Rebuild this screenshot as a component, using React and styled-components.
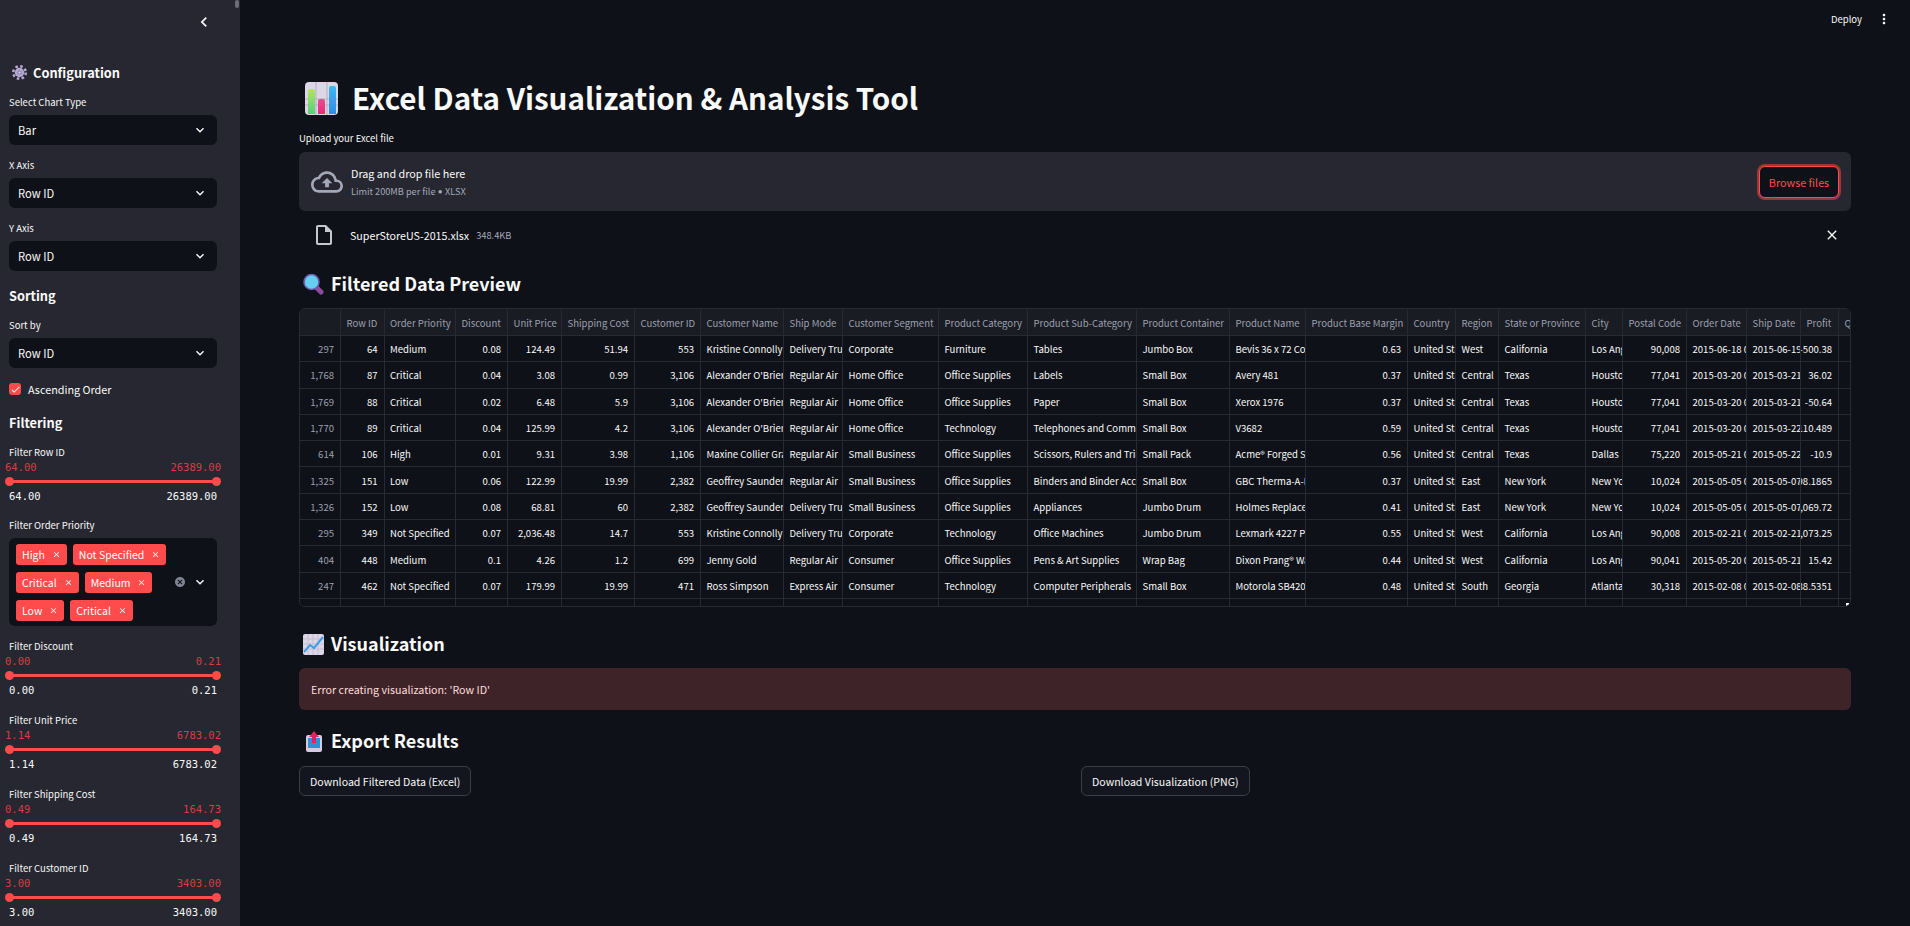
import React from 'react';
import styled, { createGlobalStyle } from 'styled-components';
import { MdChevronLeft, MdExpandMore, MdClose, MdCancel, MdMoreVert, MdOutlineCloudUpload, MdOutlineInsertDriveFile, MdCheck } from 'react-icons/md';

const SANS = '"Noto Sans CJK SC", "Lato", "Liberation Sans", sans-serif';
const MONO = '"DejaVu Sans Mono", "Liberation Mono", monospace';

const GlobalStyle = createGlobalStyle`
    html, body {
        margin: 0;
        padding: 0;
        background: #0e1117;
        overflow: hidden;
    }
    * {
        box-sizing: border-box;
    }
`

const Page = styled('div')`
    display: flex;
    width: 1910px;
    height: 926px;
    overflow: hidden;
    background: #0e1117;
    color: #fafafa;
    font-family: ${SANS};
`

const Sidebar = styled('aside')`
    position: relative;
    flex: 0 0 240px;
    height: 926px;
    overflow: hidden;
    background: #262730;
    padding: 0 23px 0 9px;
`

const ScrollThumb = styled('div')`
    position: absolute;
    top: 0;
    right: 1px;
    width: 4px;
    height: 8px;
    border-radius: 2px;
    background: #6b6d76;
`

const CollapseRow = styled('div')`
    display: flex;
    justify-content: flex-end;
    align-items: center;
    height: 44px;
    padding-right: 4px;
    font-size: 20px;
    margin-right: -1px;
`

const SideTitle = styled('div')`
    display: flex;
    align-items: center;
    gap: 6px;
    height: 18px;
    padding: 0 0 1px ${p => p.$indent || 0}px;
    margin-top: ${p => p.$top}px;
    font-size: 12.8px;
    font-weight: 700;
`

const FieldLabel = styled('div')`
    height: 14px;
    line-height: 14px;
    margin-top: ${p => p.$top}px;
    font-size: 9.5px;
    color: #fafafa;
    white-space: nowrap;
`

const SelectBox = styled('div')`
    display: flex;
    align-items: center;
    justify-content: space-between;
    height: 30px;
    margin-top: 6px;
    padding: 0 9px;
    border-radius: 6px;
    background: #0e1117;
    font-size: 11.2px;
    svg {
        font-size: 16px;
    }
`

const CheckRow = styled('div')`
    display: flex;
    align-items: center;
    gap: 7px;
    height: 12px;
    margin-top: 15px;
    font-size: 10.8px;
`

const CheckMark = styled('span')`
    display: flex;
    align-items: center;
    justify-content: center;
    width: 12px;
    height: 12px;
    border-radius: 3px;
    background: #ff4b4b;
    color: #fff;
    font-size: 11px;
`

const RedValues = styled('div')`
    display: flex;
    justify-content: space-between;
    height: 12px;
    line-height: 12px;
    margin: 2px -4px 0;
    font-family: ${MONO};
    font-size: 10.5px;
    color: #d43f42;
`

const TrackRow = styled('div')`
    display: flex;
    align-items: center;
    height: 16px;
`

const Track = styled('div')`
    position: relative;
    width: 100%;
    height: 3px;
    background: #ff4b4b;
    &::before, &::after {
        content: '';
        position: absolute;
        top: -3px;
        width: 9px;
        height: 9px;
        border-radius: 50%;
        background: #ff4b4b;
    }
    &::before {
        left: -4px;
    }
    &::after {
        right: -4px;
    }
`

const EndValues = styled('div')`
    display: flex;
    justify-content: space-between;
    height: 12px;
    line-height: 12px;
    margin-top: 1px;
    font-family: ${MONO};
    font-size: 10.5px;
    color: #fafafa;
`

const MultiBox = styled('div')`
    display: flex;
    align-items: center;
    justify-content: space-between;
    height: 88px;
    margin-top: 6px;
    padding: 0 9px 0 7px;
    border-radius: 6px;
    background: #0e1117;
`

const TagWrap = styled('div')`
    display: flex;
    flex-wrap: wrap;
    gap: 7px 6px;
    width: 160px;
`

const Tag = styled('span')`
    display: inline-flex;
    align-items: center;
    justify-content: space-between;
    gap: 7px;
    height: 21px;
    padding: 0 6px;
    border-radius: 3px;
    background: #ff4b4b;
    color: #fff;
    font-size: 10.5px;
    white-space: nowrap;
    svg {
        font-size: 9px;
    }
`

const MultiIcons = styled('div')`
    display: flex;
    align-items: center;
    gap: 6px;
    font-size: 16px;
`

const ClearIcon = styled('span')`
    display: flex;
    color: #808495;
    font-size: 12px;
`

const Main = styled('main')`
    flex: 1;
    min-width: 0;
    padding: 0 59px;
`

const TopBar = styled('div')`
    display: flex;
    align-items: center;
    justify-content: flex-end;
    gap: 14px;
    height: 38px;
    margin-right: -41px;
    font-size: 9.5px;
    svg {
        font-size: 16px;
    }
`

const PageTitle = styled('h1')`
    display: flex;
    align-items: center;
    gap: 14px;
    height: 33px;
    padding-bottom: 2px;
    margin: 44px 0 0 6px;
    font-size: 29.6px;
    font-weight: 700;
    line-height: 31px;
    white-space: nowrap;
    svg {
        margin-top: 2px;
    }
`

const UploadLabel = styled('div')`
    height: 14px;
    line-height: 14px;
    margin-top: 16px;
    font-size: 9.5px;
`

const Uploader = styled('div')`
    display: flex;
    align-items: center;
    height: 59px;
    margin-top: 7px;
    padding: 0 12px;
    border-radius: 6px;
    background: #262730;
`

const UploadIcon = styled('span')`
    display: flex;
    flex: 0 0 40px;
    color: #a3a8b8;
    font-size: 32px;
`

const UploadText = styled('div')`
    flex: 1;
`

const DropTitle = styled('div')`
    margin-top: 1px;
    font-size: 10.75px;
    line-height: 16px;
`

const DropHint = styled('div')`
    margin-top: 2px;
    font-size: 9.2px;
    line-height: 14px;
    color: #a3a8b8;
`

const HintDot = styled('span')`
    font-family: "Lato", sans-serif;
`

const BrowseButton = styled('button')`
    width: 80px;
    height: 32px;
    border: 1px solid #ff4b4b;
    border-radius: 6px;
    background: #0e1117;
    box-shadow: 0 0 0 2px rgba(255, 75, 75, 0.5);
    color: #ff4b4b;
    font-family: ${SANS};
    font-size: 10.8px;
    padding: 0;
`

const FileRow = styled('div')`
    display: flex;
    align-items: center;
    height: 18px;
    margin-top: 15px;
    padding-left: 14px;
`

const FileIcon = styled('span')`
    display: flex;
    flex: 0 0 38px;
    color: #c5c8d2;
    font-size: 24px;
    margin-left: -1px;
`

const FileName = styled('span')`
    font-size: 10.7px;
`

const FileSize = styled('span')`
    flex: 1;
    margin-left: 7px;
    font-size: 9.3px;
    color: #a3a8b8;
`

const FileClose = styled('span')`
    display: flex;
    margin-right: 11px;
    font-size: 16px;
`

const Heading = styled('h2')`
    display: flex;
    align-items: center;
    gap: 7px;
    height: 26px;
    padding-bottom: 2px;
    margin: ${p => p.$top}px 0 0 3px;
    font-size: 18px;
    font-weight: 700;
    white-space: nowrap;
    svg {
        margin-top: 2px;
    }
`

const TableFrame = styled('div')`
    position: relative;
    height: 299px;
    margin-top: 11px;
    overflow: hidden;
    border: 1px solid #262b33;
    border-radius: 6px;
    font-size: 9.55px;
`

const TableRow = styled('div')`
    display: grid;
    height: ${p => p.$height}px;
    background: ${p => (p.$head ? '#1a1c24' : '#0e1117')};
`

const Cell = styled('div')`
    display: flex;
    align-items: center;
    justify-content: ${p => (p.$right ? 'flex-end' : 'flex-start')};
    min-width: 0;
    padding: 1px 6px 0 5.5px;
    overflow: hidden;
    white-space: nowrap;
    border-right: 1px solid #262b33;
    border-bottom: 1px solid #262b33;
    color: ${p => (p.$dim ? '#9ca0ae' : '#fafafa')};
    > span {
        flex: 0 0 auto;
    }
`

const ResizeHandle = styled('div')`
    position: absolute;
    right: 1px;
    bottom: 0;
    width: 3px;
    height: 3px;
    background: #fafafa;
`

const ErrorBox = styled('div')`
    display: flex;
    align-items: center;
    height: 42px;
    margin-top: 11px;
    padding: 0 12px;
    border-radius: 6px;
    background: #3e2428;
    color: #ffdede;
    font-size: 10.7px;
`

const ButtonColumns = styled('div')`
    display: grid;
    grid-template-columns: 1fr 1fr;
    gap: 12px;
    margin-top: 12px;
`

const DownloadButton = styled('button')`
    justify-self: start;
    height: 30px;
    padding: 0 10px;
    border: 1px solid #3b3e48;
    border-radius: 6px;
    background: #13161e;
    color: #fafafa;
    font-family: ${SANS};
    font-size: 10.6px;
`

const GearIcon = () => (
    <svg width="15" height="15" viewBox="0 0 24 24">
        <circle cx="12" cy="12" r="7.5" fill="#b7a8d2" />
        <circle cx="12" cy="12" r="10" fill="none" stroke="#b7a8d2" strokeWidth="4" strokeDasharray="4 3.85" />
        <circle cx="12" cy="12" r="3.6" fill="#8f80b0" />
        <circle cx="12" cy="12" r="1.8" fill="#d9d0ea" />
    </svg>
)

const BarChartIcon = () => (
    <svg width="33" height="33" viewBox="0 0 33 33">
        <defs>
            <linearGradient id="barGreen" x1="0" y1="0" x2="0" y2="1">
                <stop offset="0" stopColor="#b5e45e" />
                <stop offset="1" stopColor="#52d07c" />
            </linearGradient>
            <linearGradient id="barPink" x1="0" y1="0" x2="0" y2="1">
                <stop offset="0" stopColor="#f2488f" />
                <stop offset="1" stopColor="#e62b7c" />
            </linearGradient>
            <linearGradient id="barBlue" x1="0" y1="0" x2="0" y2="1">
                <stop offset="0" stopColor="#3fb6f2" />
                <stop offset="1" stopColor="#2d8fe6" />
            </linearGradient>
        </defs>
        <rect width="33" height="33" rx="4" fill="#dcd6e6" />
        <path d="M11 0v33M22 0v33M0 17h33M0 23h33" stroke="#b6afc4" strokeWidth="1" />
        <path d="M3 32V9a2 2 0 0 1 2-2h3a2 2 0 0 1 2 2v23z" fill="url(#barGreen)" />
        <path d="M13 32V19a2 2 0 0 1 2-2h3a2 2 0 0 1 2 2v13z" fill="url(#barPink)" />
        <path d="M24 32V6a2 2 0 0 1 2-2h3a2 2 0 0 1 2 2v26z" fill="url(#barBlue)" />
    </svg>
)

const MagnifierIcon = () => (
    <svg width="22" height="22" viewBox="0 0 22 22">
        <path d="M14.5 14.5l4.5 4.5" stroke="#8c4c9c" strokeWidth="5" strokeLinecap="round" />
        <circle cx="9.5" cy="9" r="7.5" fill="#66cff0" stroke="#6d5bb0" strokeWidth="1.6" />
    </svg>
)

const TrendIcon = () => (
    <svg width="22" height="21" viewBox="0 0 22 21">
        <rect width="21" height="21" x="1" rx="2" fill="#dcd6e6" />
        <path d="M6 0v21M11 0v21M16 0v21M1 5h21M1 10h21M1 15h21" stroke="#c6bfd4" strokeWidth="1" />
        <path d="M2 18l6-7 4 3 9-11" fill="none" stroke="#3a9fe8" strokeWidth="2" />
    </svg>
)

const OutboxIcon = () => (
    <svg width="22" height="21" viewBox="0 0 22 21">
        <rect x="4" y="4" width="16" height="17" rx="2" fill="#d4cce2" />
        <rect x="6" y="7" width="12" height="10" fill="#2f8fd8" />
        <path d="M12 0l5 6h-3v6h-4V6H7z" fill="#e0245e" />
    </svg>
)

const columns = [41, 43.5, 71.5, 52, 54, 73, 66, 83, 59, 96, 89, 109, 93, 76, 102, 48, 43, 87, 37, 64, 60, 54, 38, 40]
const gridColumns = columns.map(w => `${w}px`).join(' ')

const headers = [
    '', 'Row ID', 'Order Priority', 'Discount', 'Unit Price', 'Shipping Cost', 'Customer ID',
    'Customer Name', 'Ship Mode', 'Customer Segment', 'Product Category', 'Product Sub-Category',
    'Product Container', 'Product Name', 'Product Base Margin', 'Country', 'Region',
    'State or Province', 'City', 'Postal Code', 'Order Date', 'Ship Date', 'Profit', 'Quantity',
]

const rightAligned = new Set([0, 1, 3, 4, 5, 6, 14, 19, 22])

const rows = [
    ['297', '64', 'Medium', '0.08', '124.49', '51.94', '553', 'Kristine Connolly', 'Delivery Truck', 'Corporate', 'Furniture', 'Tables', 'Jumbo Box', 'Bevis 36 x 72 Conference', '0.63', 'United States', 'West', 'California', 'Los Angeles', '90,008', '2015-06-18 00:00:00', '2015-06-19 00:00:00', '-500.38', ''],
    ['1,768', '87', 'Critical', '0.04', '3.08', '0.99', '3,106', "Alexander O'Brien", 'Regular Air', 'Home Office', 'Office Supplies', 'Labels', 'Small Box', 'Avery 481', '0.37', 'United States', 'Central', 'Texas', 'Houston', '77,041', '2015-03-20 00:00:00', '2015-03-21 00:00:00', '36.02', ''],
    ['1,769', '88', 'Critical', '0.02', '6.48', '5.9', '3,106', "Alexander O'Brien", 'Regular Air', 'Home Office', 'Office Supplies', 'Paper', 'Small Box', 'Xerox 1976', '0.37', 'United States', 'Central', 'Texas', 'Houston', '77,041', '2015-03-20 00:00:00', '2015-03-21 00:00:00', '-50.64', ''],
    ['1,770', '89', 'Critical', '0.04', '125.99', '4.2', '3,106', "Alexander O'Brien", 'Regular Air', 'Home Office', 'Technology', 'Telephones and Communication', 'Small Box', 'V3682', '0.59', 'United States', 'Central', 'Texas', 'Houston', '77,041', '2015-03-20 00:00:00', '2015-03-22 00:00:00', '-110.489', ''],
    ['614', '106', 'High', '0.01', '9.31', '3.98', '1,106', 'Maxine Collier Grady', 'Regular Air', 'Small Business', 'Office Supplies', 'Scissors, Rulers and Trimmers', 'Small Pack', 'Acme® Forged Steel', '0.56', 'United States', 'Central', 'Texas', 'Dallas', '75,220', '2015-05-21 00:00:00', '2015-05-22 00:00:00', '-10.9', ''],
    ['1,325', '151', 'Low', '0.06', '122.99', '19.99', '2,382', 'Geoffrey Saunders', 'Regular Air', 'Small Business', 'Office Supplies', 'Binders and Binder Accessories', 'Small Box', 'GBC Therma-A-Bind', '0.37', 'United States', 'East', 'New York', 'New York City', '10,024', '2015-05-05 00:00:00', '2015-05-07 00:00:00', '-98.1865', ''],
    ['1,326', '152', 'Low', '0.08', '68.81', '60', '2,382', 'Geoffrey Saunders', 'Delivery Truck', 'Small Business', 'Office Supplies', 'Appliances', 'Jumbo Drum', 'Holmes Replacement', '0.41', 'United States', 'East', 'New York', 'New York City', '10,024', '2015-05-05 00:00:00', '2015-05-07 00:00:00', '-1,069.72', ''],
    ['295', '349', 'Not Specified', '0.07', '2,036.48', '14.7', '553', 'Kristine Connolly', 'Delivery Truck', 'Corporate', 'Technology', 'Office Machines', 'Jumbo Drum', 'Lexmark 4227 Plus', '0.55', 'United States', 'West', 'California', 'Los Angeles', '90,008', '2015-02-21 00:00:00', '2015-02-21 00:00:00', '1,073.25', ''],
    ['404', '448', 'Medium', '0.1', '4.26', '1.2', '699', 'Jenny Gold', 'Regular Air', 'Consumer', 'Office Supplies', 'Pens & Art Supplies', 'Wrap Bag', 'Dixon Prang® Watercolor', '0.44', 'United States', 'West', 'California', 'Los Angeles', '90,041', '2015-05-20 00:00:00', '2015-05-21 00:00:00', '15.42', ''],
    ['247', '462', 'Not Specified', '0.07', '179.99', '19.99', '471', 'Ross Simpson', 'Express Air', 'Consumer', 'Technology', 'Computer Peripherals', 'Small Box', 'Motorola SB4200', '0.48', 'United States', 'South', 'Georgia', 'Atlanta', '30,318', '2015-02-08 00:00:00', '2015-02-08 00:00:00', '-88.5351', ''],
]

const priorities = ['High', 'Not Specified', 'Critical', 'Medium', 'Low', 'Critical']

const sliders = [
    ['Filter Discount', '0.00', '0.21'],
    ['Filter Unit Price', '1.14', '6783.02'],
    ['Filter Shipping Cost', '0.49', '164.73'],
    ['Filter Customer ID', '3.00', '3403.00'],
]

function SelectField({ label, value, top = 13 }) {
    return (
        <>
            <FieldLabel $top={top}>{label}</FieldLabel>
            <SelectBox>{value}<MdExpandMore /></SelectBox>
        </>
    );
}

function RangeField({ label, min, max, top = 17 }) {
    return (
        <>
            <FieldLabel $top={top}>{label}</FieldLabel>
            <RedValues><span>{min}</span><span>{max}</span></RedValues>
            <TrackRow><Track /></TrackRow>
            <EndValues><span>{min}</span><span>{max}</span></EndValues>
        </>
    );
}

function App() {
    return (
        <Page>
            <GlobalStyle />
            <Sidebar>
                <ScrollThumb />
                <CollapseRow><MdChevronLeft /></CollapseRow>
                <SideTitle $top={20} $indent={3}><GearIcon />Configuration</SideTitle>
                <SelectField label="Select Chart Type" value="Bar" />
                <SelectField label="X Axis" value="Row ID" />
                <SelectField label="Y Axis" value="Row ID" />
                <SideTitle $top={16}>Sorting</SideTitle>
                <SelectField label="Sort by" value="Row ID" />
                <CheckRow><CheckMark><MdCheck /></CheckMark>Ascending Order</CheckRow>
                <SideTitle $top={19}>Filtering</SideTitle>
                <RangeField label="Filter Row ID" min="64.00" max="26389.00" top={13} />
                <FieldLabel $top={16}>Filter Order Priority</FieldLabel>
                <MultiBox>
                    <TagWrap>
                        {priorities.map((p, i) => <Tag key={i}>{p}<MdClose /></Tag>)}
                    </TagWrap>
                    <MultiIcons>
                        <ClearIcon><MdCancel /></ClearIcon>
                        <MdExpandMore />
                    </MultiIcons>
                </MultiBox>
                {sliders.map(([label, min, max], i) => (
                    <RangeField key={label} label={label} min={min} max={max} top={i === 0 ? 13 : 17} />
                ))}
            </Sidebar>
            <Main>
                <TopBar>Deploy<MdMoreVert /></TopBar>
                <PageTitle><BarChartIcon />Excel Data Visualization &amp; Analysis Tool</PageTitle>
                <UploadLabel>Upload your Excel file</UploadLabel>
                <Uploader>
                    <UploadIcon><MdOutlineCloudUpload /></UploadIcon>
                    <UploadText>
                        <DropTitle>Drag and drop file here</DropTitle>
                        <DropHint>Limit 200MB per file <HintDot>•</HintDot> XLSX</DropHint>
                    </UploadText>
                    <BrowseButton>Browse files</BrowseButton>
                </Uploader>
                <FileRow>
                    <FileIcon><MdOutlineInsertDriveFile /></FileIcon>
                    <FileName>SuperStoreUS-2015.xlsx</FileName>
                    <FileSize>348.4KB</FileSize>
                    <FileClose><MdClose /></FileClose>
                </FileRow>
                <Heading $top={27}><MagnifierIcon />Filtered Data Preview</Heading>
                <TableFrame>
                    <TableRow $head $height={27} style={{ gridTemplateColumns: gridColumns }}>
                        {headers.map((h, i) => <Cell key={i} $dim><span>{h}</span></Cell>)}
                    </TableRow>
                    {rows.map((row, r) => (
                        <TableRow key={r} $height={26.3} style={{ gridTemplateColumns: gridColumns }}>
                            {row.map((c, i) => (
                                <Cell key={i} $right={rightAligned.has(i)} $dim={i === 0}><span>{c}</span></Cell>
                            ))}
                        </TableRow>
                    ))}
                    <TableRow $height={26.3} style={{ gridTemplateColumns: gridColumns }}>
                        {columns.map((w, i) => <Cell key={i} />)}
                    </TableRow>
                    <ResizeHandle />
                </TableFrame>
                <Heading $top={24}><TrendIcon />Visualization</Heading>
                <ErrorBox>Error creating visualization: 'Row ID'</ErrorBox>
                <Heading $top={18}><OutboxIcon />Export Results</Heading>
                <ButtonColumns>
                    <DownloadButton>Download Filtered Data (Excel)</DownloadButton>
                    <DownloadButton>Download Visualization (PNG)</DownloadButton>
                </ButtonColumns>
            </Main>
        </Page>
    );
}

export default App;
